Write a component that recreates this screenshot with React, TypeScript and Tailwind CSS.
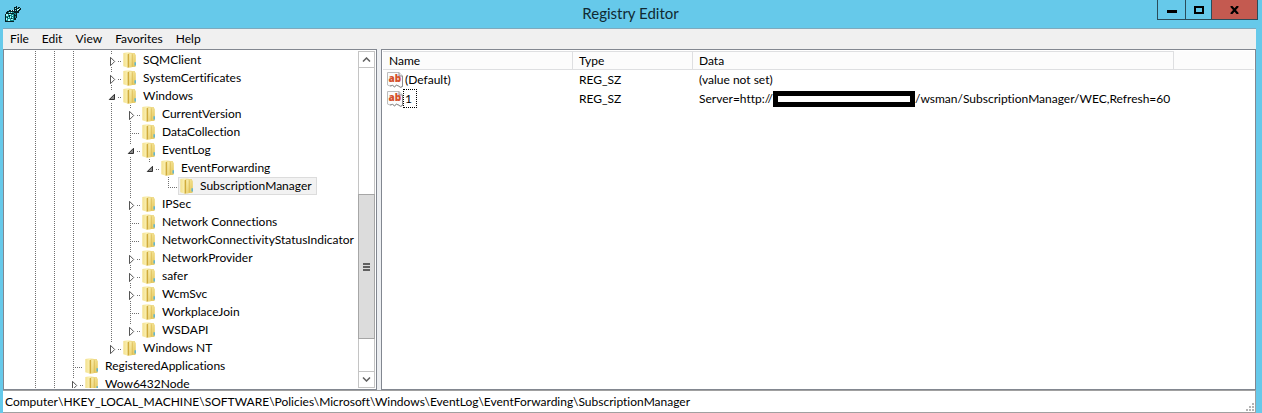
import React from "react";

type Expander = "open" | "closed" | "none";

interface TreeNode {
  name: string;
  depth: number;
  guides: number[];
  expander: Expander;
  last?: boolean;
  selected?: boolean;
}

const NODES: TreeNode[] = [
  { name: "SQMClient", depth: 5, guides: [1, 2, 3], expander: "closed" },
  { name: "SystemCertificates", depth: 5, guides: [1, 2, 3], expander: "closed" },
  { name: "Windows", depth: 5, guides: [1, 2, 3], expander: "open" },
  { name: "CurrentVersion", depth: 6, guides: [1, 2, 3, 5], expander: "closed" },
  { name: "DataCollection", depth: 6, guides: [1, 2, 3, 5], expander: "none" },
  { name: "EventLog", depth: 6, guides: [1, 2, 3, 5], expander: "open" },
  { name: "EventForwarding", depth: 7, guides: [1, 2, 3, 5, 6], expander: "open", last: true },
  { name: "SubscriptionManager", depth: 8, guides: [1, 2, 3, 5, 6], expander: "none", last: true, selected: true },
  { name: "IPSec", depth: 6, guides: [1, 2, 3, 5], expander: "closed" },
  { name: "Network Connections", depth: 6, guides: [1, 2, 3, 5], expander: "none" },
  { name: "NetworkConnectivityStatusIndicator", depth: 6, guides: [1, 2, 3, 5], expander: "none" },
  { name: "NetworkProvider", depth: 6, guides: [1, 2, 3, 5], expander: "closed" },
  { name: "safer", depth: 6, guides: [1, 2, 3, 5], expander: "closed" },
  { name: "WcmSvc", depth: 6, guides: [1, 2, 3, 5], expander: "closed" },
  { name: "WorkplaceJoin", depth: 6, guides: [1, 2, 3, 5], expander: "none" },
  { name: "WSDAPI", depth: 6, guides: [1, 2, 3, 5], expander: "closed", last: true },
  { name: "Windows NT", depth: 5, guides: [1, 2, 3], expander: "closed", last: true },
  { name: "RegisteredApplications", depth: 3, guides: [1, 2], expander: "none" },
  { name: "Wow6432Node", depth: 3, guides: [1, 2], expander: "closed", last: true },
];

const MENUS = ["File", "Edit", "View", "Favorites", "Help"];

function GuideCell({ kind, expander, last }: { kind: "line" | "blank" | "node"; expander?: Expander; last?: boolean }) {
  const dots = { stroke: "#707070", strokeDasharray: "1 1", strokeWidth: 1 };
  return (
    <svg className="block h-[18px] w-[19px] shrink-0" viewBox="0 0 19 18" shapeRendering="crispEdges" fill="none" aria-hidden="true">
      {kind === "line" && <path d="M9.5 0V18" {...dots} />}
      {kind === "node" && expander === "none" && (
        <>
          <path d={last ? "M9.5 0V10" : "M9.5 0V18"} {...dots} />
          <path d="M9 10.5H19" {...dots} />
        </>
      )}
      {kind === "node" && expander !== "none" && (
        <>
          <path d="M9.5 0V4" {...dots} />
          {!last && <path d="M9.5 16V18" {...dots} />}
          <path d="M16 10.5H19" {...dots} />
        </>
      )}
      {kind === "node" && expander === "closed" && (
        <path d="M8.5 6.3V14.7L12.7 10.5Z" fill="#fff" stroke="#555" shapeRendering="auto" />
      )}
      {kind === "node" && expander === "open" && (
        <path d="M12.5 7.3V12.5H7.3Z" fill="#8a8a8a" stroke="#303030" shapeRendering="auto" />
      )}
    </svg>
  );
}

function FolderIcon() {
  return (
    <svg className="block h-4 w-[14px] shrink-0" viewBox="0 0 14 16" aria-hidden="true">
      <defs>
        <linearGradient id="folderBack" x1="0" x2="1">
          <stop offset="0" stopColor="#f3e08c" />
          <stop offset="0.4" stopColor="#fbf2b8" />
          <stop offset="1" stopColor="#dcb943" />
        </linearGradient>
        <linearGradient id="folderFront" x1="0" y1="0" x2="1" y2="1">
          <stop offset="0" stopColor="#fbf0b0" />
          <stop offset="1" stopColor="#e2c250" />
        </linearGradient>
      </defs>
      <path d="M0.3 1L5 0.3L12 1.6V14.4L5 15.7L0.3 14.2Z" fill="url(#folderBack)" />
      <path d="M4.6 2.2L6.4 1.4V15.2L4.6 15.8Z" fill="#d0ab3c" />
      <path d="M6.4 2L11.4 1.2L12.8 3V14.4L6.4 15.6Z" fill="url(#folderFront)" />
      <path d="M9.3 2.2V14.6" stroke="#d8b54a" strokeWidth="0.7" />
      <path d="M12.2 10.2V13.4" stroke="#47b0e2" strokeWidth="1.3" />
    </svg>
  );
}

function StringIcon() {
  return (
    <svg className="block h-4 w-4 shrink-0" viewBox="0 0 16 16" aria-hidden="true">
      <path d="M0.5 0.5H12L15.5 4V14.5L13.5 15.3L11.5 14L9.5 13.2L7.5 14.8L5.5 13.4L3 14L0.5 13Z" fill="#fbfbfb" stroke="#bdbdbd" />
      <path d="M15.5 4V14.5L13.5 15.3L11.5 14L9.5 13.2L7.5 14.8L5.5 13.4L3 14" fill="none" stroke="#8c8c8c" />
      <path d="M12 0.5V4H15.5" fill="#e6e6e6" stroke="#909090" />
      <text x="1.6" y="10" fontSize="10" fontWeight="800" fill="#d4502b" fontFamily="'Open Sans', sans-serif">ab</text>
    </svg>
  );
}

function RegistryIcon() {
  return (
    <svg className="block h-4 w-4 shrink-0" viewBox="0 0 16 16" shapeRendering="crispEdges" aria-hidden="true">
      <path d="M2 5H4V4H10V5H12V12H11V14H9V16H0V8H1V6H2Z" fill="#072226" />
      <path d="M1 8H9V15H1ZM3 6H9V7H3Z" fill="#12898c" />
      <path d="M1 8H3V10H1ZM4 8H6V9H4ZM5 10H6V12H5ZM7 9H8V10H7ZM1 12H2V14H1ZM3 11H4V12H3ZM3 13H5V15H3ZM6 13H8V14H6ZM7 11H8V12H7ZM4 6H5V7H4ZM6 6H7V7H6Z" fill="#a9fbf9" />
      <path d="M4 9H5V11H4ZM2 11H3V12H2ZM6 12H7V13H6Z" fill="#072226" />
      <path d="M9 7H11V9H10V8H9ZM10 10H11V12H10Z" fill="#12898c" />
      <path d="M9 1H11V0H12V2H13V1H15V2H16V4H15V5H14V7H12V6H11V4H9Z" fill="#072226" />
      <path d="M10 2H11V3H10ZM12 3H13V5H12ZM14 2H15V3H14Z" fill="#8cf4f2" />
      <path d="M13 3H14V4H13ZM8 4H9V5H8ZM6 4H7V5H6Z" fill="#e6fefd" />
    </svg>
  );
}

function TreeRow({ node }: { node: TreeNode }) {
  const cells = Array.from({ length: node.depth }, (_, i) => i + 1);
  return (
    <li className="flex h-[18px]">
      {cells.map((level) => (
        <GuideCell
          key={level}
          kind={level === node.depth ? "node" : node.guides.includes(level) ? "line" : "blank"}
          expander={node.expander}
          last={node.last}
        />
      ))}
      <button
        type="button"
        className={
          node.selected
            ? "flex h-[18px] items-center gap-[6px] border border-[#dcdcdc] bg-[#f2f2f2] pr-1 pl-px whitespace-nowrap"
            : "flex h-[18px] items-center gap-[6px] border border-transparent pl-px whitespace-nowrap"
        }
      >
        <FolderIcon />
        <span>{node.name}</span>
      </button>
    </li>
  );
}

function ScrollBar() {
  return (
    <div className="flex w-[17px] shrink-0 flex-col border border-[#c4c4c4] bg-white">
      <button type="button" aria-label="Scroll up" className="flex h-4 shrink-0 items-center justify-center border-b border-[#c4c4c4]">
        <svg className="h-[5px] w-[9px]" viewBox="0 0 9 5" fill="none" stroke="#606060" strokeWidth="1.5">
          <path d="M1 4.5L4.5 1L8 4.5" />
        </svg>
      </button>
      <div className="flex flex-1 flex-col">
        <div className="flex-[127]" />
        <div className="-mx-px flex flex-[144] flex-col items-center justify-center gap-px border border-[#a6a6a6] bg-[#dcdcdc]">
          <span className="h-[2px] w-[7px] bg-[#606060]" />
          <span className="h-[2px] w-[7px] bg-[#606060]" />
          <span className="h-[2px] w-[7px] bg-[#606060]" />
        </div>
        <div className="flex-[32]" />
      </div>
      <button type="button" aria-label="Scroll down" className="flex h-4 shrink-0 items-center justify-center border-t border-[#c4c4c4]">
        <svg className="h-[5px] w-[9px]" viewBox="0 0 9 5" fill="none" stroke="#606060" strokeWidth="1.5">
          <path d="M1 0.5L4.5 4L8 0.5" />
        </svg>
      </button>
    </div>
  );
}

function TitleBar() {
  return (
    <header className="flex h-7 shrink-0 items-start">
      <div className="flex h-7 flex-1 items-center pl-[2px]">
        <RegistryIcon />
      </div>
      <h1 className="text-[15px] leading-[27px] text-[#102a33]">Registry Editor</h1>
      <div className="flex flex-1 justify-end">
        <div className="-mr-[2px] flex h-5 border border-t-0 border-[#2a4c5a]">
          <button type="button" aria-label="Minimize" className="flex w-[28px] items-center justify-center border-r border-[#2a4c5a]">
            <span className="mt-1 h-[3px] w-[10px] bg-black" />
          </button>
          <button type="button" aria-label="Maximize" className="flex w-[26px] items-center justify-center border-r border-[#2a4c5a]">
            <span className="h-2 w-[10px] border-2 border-black" />
          </button>
          <button type="button" aria-label="Close" className="flex w-[45px] items-center justify-center bg-[#c45a50]">
            <svg className="h-2 w-[9px]" viewBox="0 0 9 8" stroke="#000" strokeWidth="2.2">
              <path d="M1 0L8 8M8 0L1 8" />
            </svg>
          </button>
        </div>
      </div>
    </header>
  );
}

function ValueList() {
  return (
    <section className="min-w-0 flex-1 overflow-hidden border border-[#828790] bg-white px-px pt-px">
      <table className="w-full table-fixed border-separate border-spacing-0 text-left">
        <colgroup>
          <col className="w-[190px]" />
          <col className="w-[120px]" />
          <col className="w-[481px]" />
          <col />
        </colgroup>
        <thead>
          <tr className="h-[19px] bg-[#fcfcfc]">
            <th className="border-t border-r border-b border-[#dedfe1] p-0 pl-[6px] font-normal">Name</th>
            <th className="border-t border-r border-b border-[#dedfe1] p-0 pl-[6px] font-normal">Type</th>
            <th className="border-t border-r border-b border-[#dedfe1] p-0 pl-[6px] font-normal">Data</th>
            <td className="border-b border-[#dedfe1] p-0" />
          </tr>
        </thead>
        <tbody>
          <tr className="h-[19px]">
            <td className="p-0 pl-1">
              <div className="flex items-center">
                <StringIcon />
                <span className="border border-transparent px-px leading-[17px]">(Default)</span>
              </div>
            </td>
            <td className="p-0 pl-[6px]">REG_SZ</td>
            <td className="p-0 pl-[6px]">(value not set)</td>
            <td className="p-0" />
          </tr>
          <tr className="h-[19px]">
            <td className="p-0 pl-1">
              <div className="flex items-center">
                <StringIcon />
                <span className="border border-dotted border-black pr-1 pl-px leading-[17px]">1</span>
              </div>
            </td>
            <td className="p-0 pl-[6px]">REG_SZ</td>
            <td className="p-0 pl-[6px]">
              <div className="flex items-center whitespace-nowrap">
                <span>Server=http://</span>
                <span className="h-4 w-[142px] shrink-0 border-[5px] border-black bg-white" />
                <span>/wsman/SubscriptionManager/WEC,Refresh=60</span>
              </div>
            </td>
            <td className="p-0" />
          </tr>
        </tbody>
      </table>
    </section>
  );
}

export default function App() {
  return (
    <div className="flex h-screen flex-col overflow-hidden bg-[#66c9ea] pr-[6px] pl-[3px] font-['Lato','Open_Sans',sans-serif] text-[12px] leading-[16px] text-black [font-variant-ligatures:none]">
      <TitleBar />
      <nav className="flex h-[21px] shrink-0 items-center gap-[13px] border-t border-[#7fa9bd] bg-[#f0f0f0] pl-[7px]">
        {MENUS.map((menu) => (
          <button key={menu} type="button">
            {menu}
          </button>
        ))}
      </nav>
      <main className="flex min-h-0 flex-1 gap-1 bg-[#eceef1]">
        <section className="flex w-[374px] shrink-0 border border-[#828790] bg-white py-px pr-px">
          <ul className="min-w-0 flex-1 overflow-hidden pl-[22px]">
            {NODES.map((node) => (
              <TreeRow key={node.name} node={node} />
            ))}
          </ul>
          <ScrollBar />
        </section>
        <ValueList />
      </main>
      <footer className="flex h-[23px] shrink-0 items-center justify-between border-t border-r border-b border-[#a0a0a0] bg-white pl-[2px]">
        <span className="whitespace-nowrap">
          Computer\HKEY_LOCAL_MACHINE\SOFTWARE\Policies\Microsoft\Windows\EventLog\EventForwarding\SubscriptionManager
        </span>
        <svg className="h-[9px] w-[9px] self-end" viewBox="0 0 9 9" fill="#b4b4b4" shapeRendering="crispEdges" aria-hidden="true">
          <path d="M6 0h2v2h-2zM3 3h2v2h-2zM6 3h2v2h-2zM0 6h2v2h-2zM3 6h2v2h-2zM6 6h2v2h-2z" />
        </svg>
      </footer>
    </div>
  );
}
